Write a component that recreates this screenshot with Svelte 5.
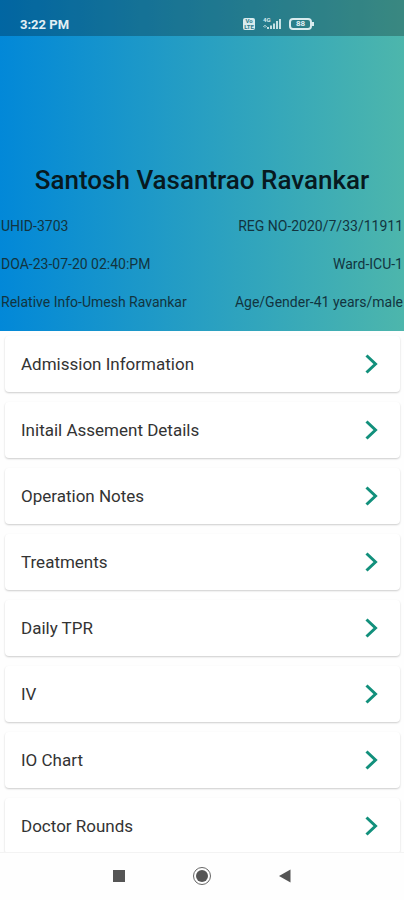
<script lang="ts">
    const patient = {
        name: "Santosh Vasantrao Ravankar",
        info: [
            ["UHID-3703", "REG NO-2020/7/33/11911"],
            ["DOA-23-07-20 02:40:PM", "Ward-ICU-1"],
            ["Relative Info-Umesh Ravankar", "Age/Gender-41 years/male"],
        ],
    };

    const sections = [
        "Admission Information",
        "Initail Assement Details",
        "Operation Notes",
        "Treatments",
        "Daily TPR",
        "IV",
        "IO Chart",
        "Doctor Rounds",
    ];
</script>

<div class="screen">
    <header>
        <div class="status">
            <span class="time">3:22 PM</span>
            <div class="indicators">
                <div class="volte"><span>Vo</span><span>LTE</span></div>
                <svg class="signal" width="20" height="14" viewBox="0 0 20 14" aria-hidden="true">
                    <text x="1" y="5">4G</text>
                    <path d="M1 10l2-2 2 2M3 8v3" />
                    <path class="bar" d="M6 12v-2M9 12V8.500M12 12V6.500M15 12V4M18 12V2" />
                </svg>
                <div class="battery"><span>88</span></div>
            </div>
        </div>
        <h1>{patient.name}</h1>
        <div class="info">
            {#each patient.info as [left, right]}
                <div class="info-row">
                    <span>{left}</span>
                    <span>{right}</span>
                </div>
            {/each}
        </div>
    </header>

    <main>
        {#each sections as section}
            <button class="card">
                <span>{section}</span>
                <svg width="14" height="20" viewBox="0 0 14 20" aria-hidden="true">
                    <path d="M1.500 1.500L10.500 10L1.500 18.500" />
                </svg>
            </button>
        {/each}
    </main>

    <nav>
        <button aria-label="Recent apps">
            <svg width="20" height="20" viewBox="0 0 20 20"><rect x="4" y="4" width="12" height="12" /></svg>
        </button>
        <button aria-label="Home">
            <svg width="20" height="20" viewBox="0 0 20 20">
                <circle class="ring" cx="10" cy="10" r="8.500" />
                <circle cx="10" cy="10" r="6" />
            </svg>
        </button>
        <button aria-label="Back">
            <svg width="20" height="20" viewBox="0 0 20 20"><path d="M15.500 3.500v13L4 10z" /></svg>
        </button>
    </nav>
</div>

<style>
    :global(body) {
        margin: 0;
        background: #fefefe;
    }

    .screen {
        display: flex;
        flex-direction: column;
        height: 100vh;
        font-family: Roboto, sans-serif;
        color: #333;
    }

    header {
        flex: none;
        background: linear-gradient(90deg, #0288d8, #4db6ac);
    }

    .status {
        display: flex;
        box-sizing: border-box;
        height: 36px;
        padding: 14px 92px 0 20px;
        justify-content: space-between;
        background: rgba(0, 0, 0, 0.25);
        color: #e2f0f5;
    }

    .time {
        font-size: 13px;
        line-height: 22px;
        font-weight: 700;
    }

    .indicators {
        display: flex;
        align-items: center;
        height: 20px;
        gap: 7px;
    }

    .volte {
        display: flex;
        flex-direction: column;
        width: 12px;
        height: 12px;
        border-radius: 2px;
        background: #d8ebee;
        color: #2b7d8c;
        font-size: 6px;
        line-height: 6px;
        font-weight: 700;
        text-align: center;
    }

    .signal {
        fill: none;
        stroke: #8fc0c5;
    }

    .signal text {
        fill: #d8ebee;
        stroke: none;
        font-size: 6px;
        font-weight: 700;
    }

    .signal .bar {
        stroke: #c5e0e3;
        stroke-width: 2;
    }

    .battery {
        position: relative;
        box-sizing: border-box;
        width: 23px;
        height: 12px;
        border: 2px solid #d8ebee;
        border-radius: 4px;
        font-size: 8px;
        line-height: 8px;
        font-weight: 700;
        text-align: center;
    }

    .battery::after {
        content: "";
        position: absolute;
        top: 2px;
        right: -4px;
        width: 2px;
        height: 4px;
        background: #d8ebee;
    }

    h1 {
        margin: 0;
        padding: 128px 0 11px;
        font-size: 26px;
        line-height: 32px;
        font-weight: 500;
        text-align: center;
        color: #07191f;
    }

    .info {
        padding: 0 1px 10px;
    }

    .info-row {
        display: flex;
        justify-content: space-between;
        font-size: 14px;
        line-height: 38px;
        color: #12343f;
    }

    main {
        display: flex;
        flex: 1;
        flex-direction: column;
        min-height: 0;
        gap: 10px;
        padding: 5px 4px 0 5px;
        overflow-y: auto;
        scrollbar-width: none;
    }

    button {
        border: none;
        background: none;
        color: inherit;
        font-family: inherit;
        cursor: pointer;
    }

    .card {
        display: flex;
        flex: none;
        align-items: center;
        justify-content: space-between;
        height: 56px;
        padding: 0 21px 0 16px;
        border-radius: 4px;
        background: #fff;
        box-shadow: 0 1px 2px rgba(0, 0, 0, 0.2);
        font-size: 17px;
    }

    .card path {
        fill: none;
        stroke: #12907c;
        stroke-width: 3;
    }

    nav {
        display: flex;
        flex: none;
        justify-content: center;
        gap: 63px;
        padding: 13px 0 14px;
        border-top: 1px solid #f3f3f3;
    }

    nav button {
        height: 20px;
        padding: 0;
    }

    nav svg {
        display: block;
        fill: #555;
    }

    .ring {
        fill: none;
        stroke: #666;
    }
</style>
